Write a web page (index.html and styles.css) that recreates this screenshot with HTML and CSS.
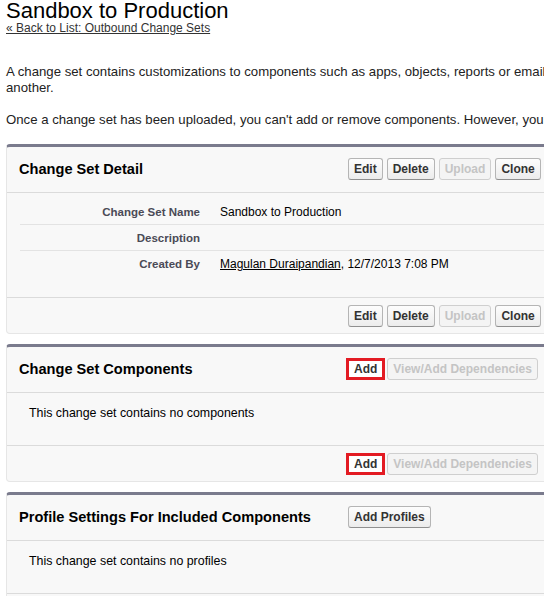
FILE: index.html
```html
<!DOCTYPE html>
<html lang="en">
<head>
  <meta charset="UTF-8">
  <meta name="viewport" content="width=device-width, initial-scale=1.0">
  <title>Sandbox to Production | Outbound Change Set</title>
  <link rel="stylesheet" href="styles.css">
</head>
<body>
  <div class="page">
    <h1 class="page-title">Sandbox to Production</h1>
    <a class="back-link" href="#">&laquo; Back to List: Outbound Change Sets</a>

    <p class="intro">A change set contains customizations to components such as apps, objects, reports or email templates that you can move from one organization to another.</p>
    <p class="intro">Once a change set has been uploaded, you can't add or remove components. However, you can clone it and add more components.</p>

    <!-- detail -->
    <div class="block">
      <div class="block-head">
        <h2>Change Set Detail</h2>
        <div class="btns">
          <button class="btn">Edit</button>
          <button class="btn">Delete</button>
          <button class="btn" disabled>Upload</button>
          <button class="btn">Clone</button>
        </div>
      </div>
      <div class="block-body">
        <table class="detail-list">
          <tr>
            <th>Change Set Name</th>
            <td>Sandbox to Production</td>
          </tr>
          <tr>
            <th>Description</th>
            <td></td>
          </tr>
          <tr>
            <th>Created By</th>
            <td><a href="#">Magulan Duraipandian</a>, 12/7/2013 7:08 PM</td>
          </tr>
        </table>
      </div>
      <div class="block-foot">
        <div class="btns">
          <button class="btn">Edit</button>
          <button class="btn">Delete</button>
          <button class="btn" disabled>Upload</button>
          <button class="btn">Clone</button>
        </div>
      </div>
    </div>

    <!-- components -->
    <div class="block">
      <div class="block-head">
        <h2>Change Set Components</h2>
        <div class="btns">
          <button class="btn marked">Add</button>
          <button class="btn" disabled>View/Add Dependencies</button>
        </div>
      </div>
      <div class="block-body">
        <p class="empty-msg">This change set contains no components</p>
      </div>
      <div class="block-foot">
        <div class="btns">
          <button class="btn marked">Add</button>
          <button class="btn" disabled>View/Add Dependencies</button>
        </div>
      </div>
    </div>

    <!-- profiles -->
    <div class="block">
      <div class="block-head">
        <h2>Profile Settings For Included Components</h2>
        <div class="btns">
          <button class="btn">Add Profiles</button>
        </div>
      </div>
      <div class="block-body">
        <p class="empty-msg">This change set contains no profiles</p>
      </div>
      <div class="block-foot">
        <div class="btns">
          <button class="btn">Add Profiles</button>
        </div>
      </div>
    </div>
  </div>
</body>
</html>
```

FILE: styles.css
```css
html {
  overflow: hidden;
}

body {
  margin: 0;
  padding: 0 0 0 6px;
  font-family: "Liberation Sans", Arial, sans-serif;
  font-size: 13.2px;
  color: #222;
  background-color: #fff;
}

.page {
  width: 880px;
}

.page-title {
  margin: 0;
  font-size: 22px;
  line-height: 22px;
  font-weight: normal;
  color: #000;
}

.back-link {
  display: block;
  font-size: 12px;
  line-height: 13px;
  color: #333;
  text-decoration: underline;
}

.intro {
  margin: 29px 0 16px;
  line-height: 16px;
}

.intro + .intro {
  margin-top: 0;
}

.block {
  margin-bottom: 10px;
  background-color: #f8f8f8;
  border: 1px solid #e6e6e6;
  border-top: 3px solid #7a7b8d;
  border-radius: 4px;
}

.block-head {
  display: flex;
  align-items: center;
  padding: 11px 0 12px;
  border-bottom: 1px solid #dbdbdb;
}

.block-head h2 {
  flex: 0 0 329px;
  margin: 0;
  padding-left: 12px;
  font-size: 14.6px;
  line-height: 22px;
  color: #000;
}

.block-body {
  padding: 6px 0 21px 13px;
}

.block-foot {
  padding: 7px 0 6px 341px;
  border-top: 1px solid #dbdbdb;
}

.btns {
  display: flex;
  gap: 4px;
}

.btn {
  box-sizing: border-box;
  height: 22px;
  padding: 0 5px;
  font-family: inherit;
  font-size: 12px;
  font-weight: bold;
  color: #333;
  background: linear-gradient(#fdfdfd, #ececec);
  border: 1px solid #b5b5b5;
  border-bottom-color: #8f8f8f;
  border-radius: 3px;
}

.btn:disabled {
  color: #c4c4c4;
  border-color: #cfcfcf;
  background: #f4f4f4;
}

/* red box drawn round the Add button */
.btn.marked {
  margin: 0 -2px;
  padding: 0 5px;
  background: #fff;
  border: 3px solid #e31b23;
  border-radius: 0;
}

.detail-list {
  border-collapse: collapse;
  width: 100%;
}

.detail-list th,
.detail-list td {
  padding: 5px 10px 4px;
  line-height: 16px;
  text-align: left;
  vertical-align: top;
  border-bottom: 1px solid #e3e3e3;
}

.detail-list tr:last-child th,
.detail-list tr:last-child td {
  border-bottom: none;
}

.detail-list th {
  width: 170px;
  text-align: right;
  font-size: 11.5px;
  color: #4a4a56;
}

.detail-list td {
  font-size: 12px;
  color: #000;
}

.detail-list a {
  color: #000;
  text-decoration: underline;
}

.empty-msg {
  margin: 6px 0 3px 9px;
  font-size: 12.4px;
  line-height: 16px;
  color: #000;
}
```
